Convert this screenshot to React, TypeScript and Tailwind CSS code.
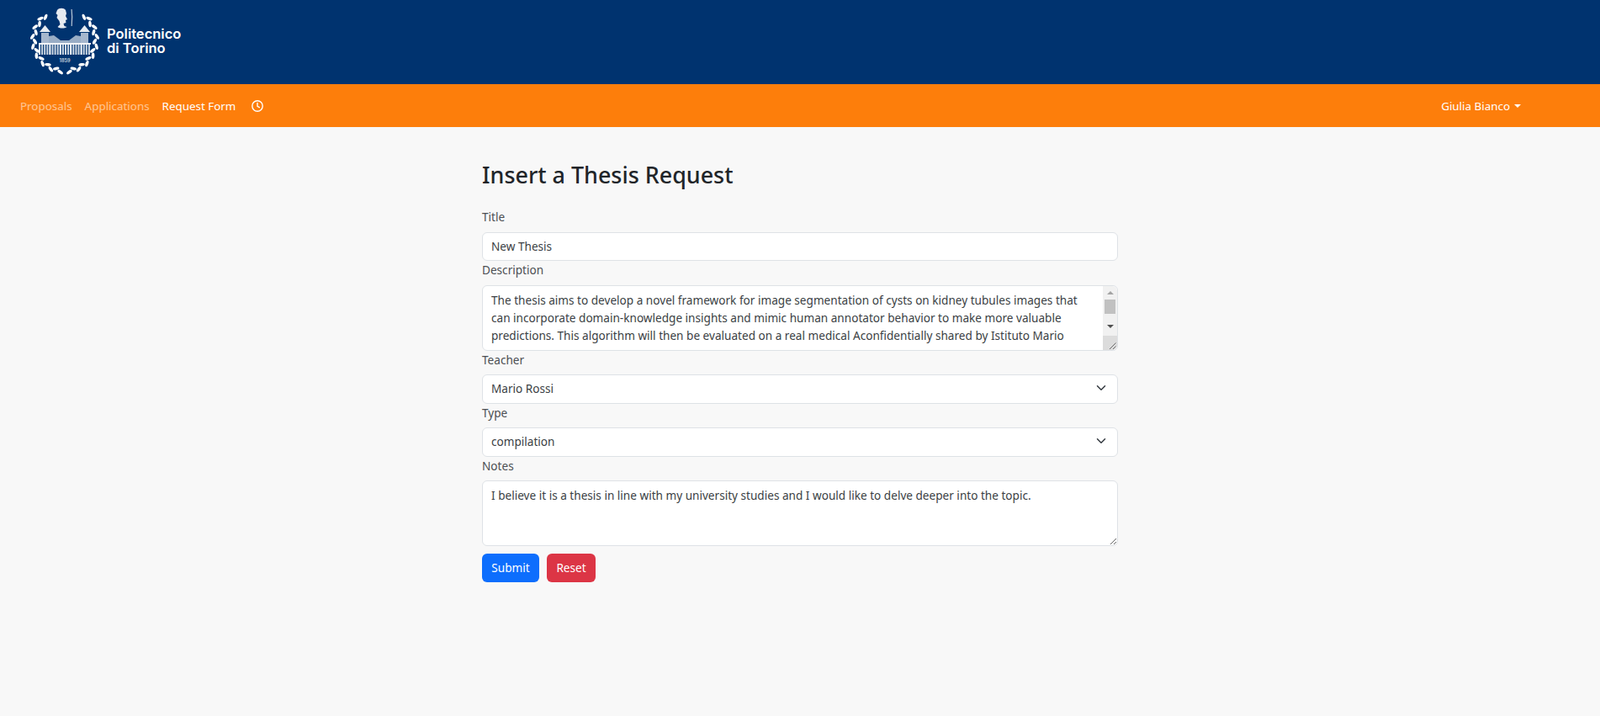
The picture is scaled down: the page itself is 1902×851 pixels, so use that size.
import React from 'react'

const desc =
  'The thesis aims to develop a novel framework for image segmentation of cysts on kidney tubules images that can incorporate domain-knowledge insights and mimic human annotator behavior to make more valuable predictions. This algorithm will then be evaluated on a real medical Aconfidentially shared by Istituto Mario'

// laurel leaves placed around the crest, from the bottom knot up to the top of each side
const leaves = Array.from({ length: 32 }, (_, i) => {
  const side = i < 16 ? -1 : 1
  const k = i < 16 ? i : i - 16
  const deg = 172 - k * 8.8
  const a = (deg * Math.PI) / 180
  const r = k % 2 === 0 ? 38.5 : 35.5
  return {
    x: 47 + side * Math.sin(a) * r,
    y: 42.5 - Math.cos(a) * r,
    rot: side * (deg + (k % 2 === 0 ? 62 : 118)),
  }
})

function Logo() {
  return (
    <svg width="95" height="90" viewBox="0 0 95 90" className="shrink-0">
      {leaves.map((l, i) => (
        <ellipse key={i} cx={l.x} cy={l.y} rx="1.8" ry="3.8" fill="#fff" transform={`rotate(${l.rot} ${l.x} ${l.y})`} />
      ))}
      {/* helmet head and spear */}
      <path d="M38 7c2-3 8-3 10 0l1 4-1 3 2 4-2 1 .5 3-3 1 1 3 3 1c-3 2-8 2-11 0l3-3-1-4-3-4 1-3-2-2z" fill="#fff" opacity="0.9" />
      <path d="M54.500 6h1.200l.6 9-.5 11h-1.200l.4-11z" fill="#fff" opacity="0.7" />
      {/* towers */}
      <path d="M17 33l6.500-8 6.500 8z" fill="#fff" opacity="0.9" />
      <path d="M64 33l6.500-8 6.500 8z" fill="#fff" opacity="0.9" />
      <path d="M19 34h9v12h-9zM66 34h9v12h-9z" fill="#fff" opacity="0.65" />
      {/* central roof */}
      <path d="M28 38l6-1 8 6h10l8-6 6 1v8H28z" fill="#fff" opacity="0.6" />
      <path d="M16 46h62v2H16z" fill="#fff" opacity="0.95" />
      {Array.from({ length: 20 }, (_, i) => (
        <path key={i} d={`M${16 + i * 3.1} 48h2v12H${16 + i * 3.1}z`} fill="#fff" opacity={i % 4 === 0 ? 1 : 0.8} />
      ))}
      <text x="47" y="69" textAnchor="middle" fontSize="5.500" fontWeight="600" fill="#fff" opacity="0.8" fontFamily="Inter, sans-serif">
        1859
      </text>
    </svg>
  )
}

function Clock() {
  return (
    <svg width="14" height="14" viewBox="0 0 14 14" fill="none" stroke="#fff" strokeWidth="1.4" strokeLinecap="round">
      <circle cx="7" cy="7" r="6.2" />
      <path d="M7 3.4V7.3L9.4 8.6" />
    </svg>
  )
}

function Field({ label, children }: { label: string; children: React.ReactNode }) {
  return (
    <div>
      <label className="mb-2 block h-[20.6px] leading-[21px] text-[#4c4f53]">{label}</label>
      {children}
    </div>
  )
}

function Select({ value }: { value: string }) {
  return (
    <div className="relative">
      <select
        defaultValue={value}
        className="block h-[34.4px] w-full appearance-none rounded-md border border-[#dee2e6] bg-white px-[10px] text-[#3b3f44] outline-none"
      >
        <option>{value}</option>
      </select>
      <svg width="12" height="12" viewBox="0 0 16 16" fill="none" stroke="#343a40" strokeWidth="2" strokeLinecap="round" strokeLinejoin="round" className="pointer-events-none absolute right-[14px] top-[10px]">
        <path d="m2 5 6 6 6-6" />
      </svg>
    </div>
  )
}

function Scrollbar() {
  return (
    <div className="pointer-events-none absolute bottom-[1px] right-[1px] top-[1px] flex w-[17px] flex-col items-center overflow-hidden rounded-r-md bg-[#f1f1f1]">
      <div className="mt-[6px] h-0 w-0 border-x-[4px] border-b-[4px] border-x-transparent border-b-[#a3a3a3]" />
      <div className="mt-[6px] h-[17px] w-[13px] bg-[#c1c1c1]" />
      <div className="mt-[13px] h-0 w-0 border-x-[4px] border-t-[4px] border-x-transparent border-t-[#505050]" />
      <div className="relative mt-auto h-[17px] w-full bg-[#dcdcdc]">
        <svg width="17" height="17" viewBox="0 0 17 17" className="absolute left-0 top-0" stroke="#6b6b6b" strokeWidth="1">
          <path d="M15.500 8.500 8 16M15.500 12.500 12 16" />
        </svg>
      </div>
    </div>
  )
}

export default function App() {
  return (
    <div className="min-h-[851px] bg-[#f8f8f8] font-['Noto_Sans','Open_Sans',sans-serif] text-[13.6px] text-[#212529]">
      {/* top banner */}
      <div className="flex h-[100px] items-center bg-[#00336f] pl-[30px]">
        <Logo />
        <div className="ml-[2px] mt-[-2px] font-['Inter',sans-serif] text-[16.5px] font-semibold leading-[17px] text-white">
          <div>Politecnico</div>
          <div>di Torino</div>
        </div>
      </div>

      {/* navbar */}
      <nav className="flex h-[51px] items-center justify-between bg-[#fd7e0b] pl-[24px] pr-[94px] pt-[1px] text-[13.4px] text-white">
        <div className="flex items-center gap-[15px]">
          <a className="text-white/55">Proposals</a>
          <a className="text-white/55">Applications</a>
          <a>Request Form</a>
          <span className="ml-[4px] flex"><Clock /></span>
        </div>
        <div className="flex items-center gap-[5px]">
          <span>Giulia Bianco</span>
          <span className="h-0 w-0 border-x-[4.5px] border-t-[4.5px] border-x-transparent border-t-white" />
        </div>
      </nav>

      {/* form */}
      <main className="mx-auto w-[756px] pt-[38px]">
        <h2 className="mb-[20px] text-[26.9px] font-medium leading-[38px] text-[#212529]">Insert a Thesis Request</h2>
        <form>
          <Field label="Title">
            <input
              defaultValue="New Thesis"
              className="block h-[34.4px] w-full rounded-md border border-[#dee2e6] bg-white px-[10px] text-[#3b3f44] outline-none"
            />
          </Field>
          <Field label="Description">
            <div className="relative">
              <textarea
                defaultValue={desc}
                className="block h-[78px] w-full overflow-hidden rounded-md border border-[#dee2e6] bg-white py-[6px] pl-[10px] pr-[27px] leading-[21.3px] text-[#3b3f44] outline-none"
              />
              <Scrollbar />
            </div>
          </Field>
          <Field label="Teacher">
            <Select value="Mario Rossi" />
          </Field>
          <Field label="Type">
            <Select value="compilation" />
          </Field>
          <Field label="Notes">
            <textarea
              defaultValue="I believe it is a thesis in line with my university studies and I would like to delve deeper into the topic."
              className="block h-[78px] w-full rounded-md border border-[#dee2e6] bg-white px-[10px] py-[6px] leading-[21.3px] text-[#3b3f44] outline-none"
            />
          </Field>
          <div className="mt-[9px] flex gap-[9px]">
            <button type="button" className="h-[34px] w-[68px] rounded-md bg-[#0d6efd] text-white">Submit</button>
            <button type="button" className="h-[34px] w-[58px] rounded-md bg-[#dc3545] text-white">Reset</button>
          </div>
        </form>
      </main>
    </div>
  )
}
